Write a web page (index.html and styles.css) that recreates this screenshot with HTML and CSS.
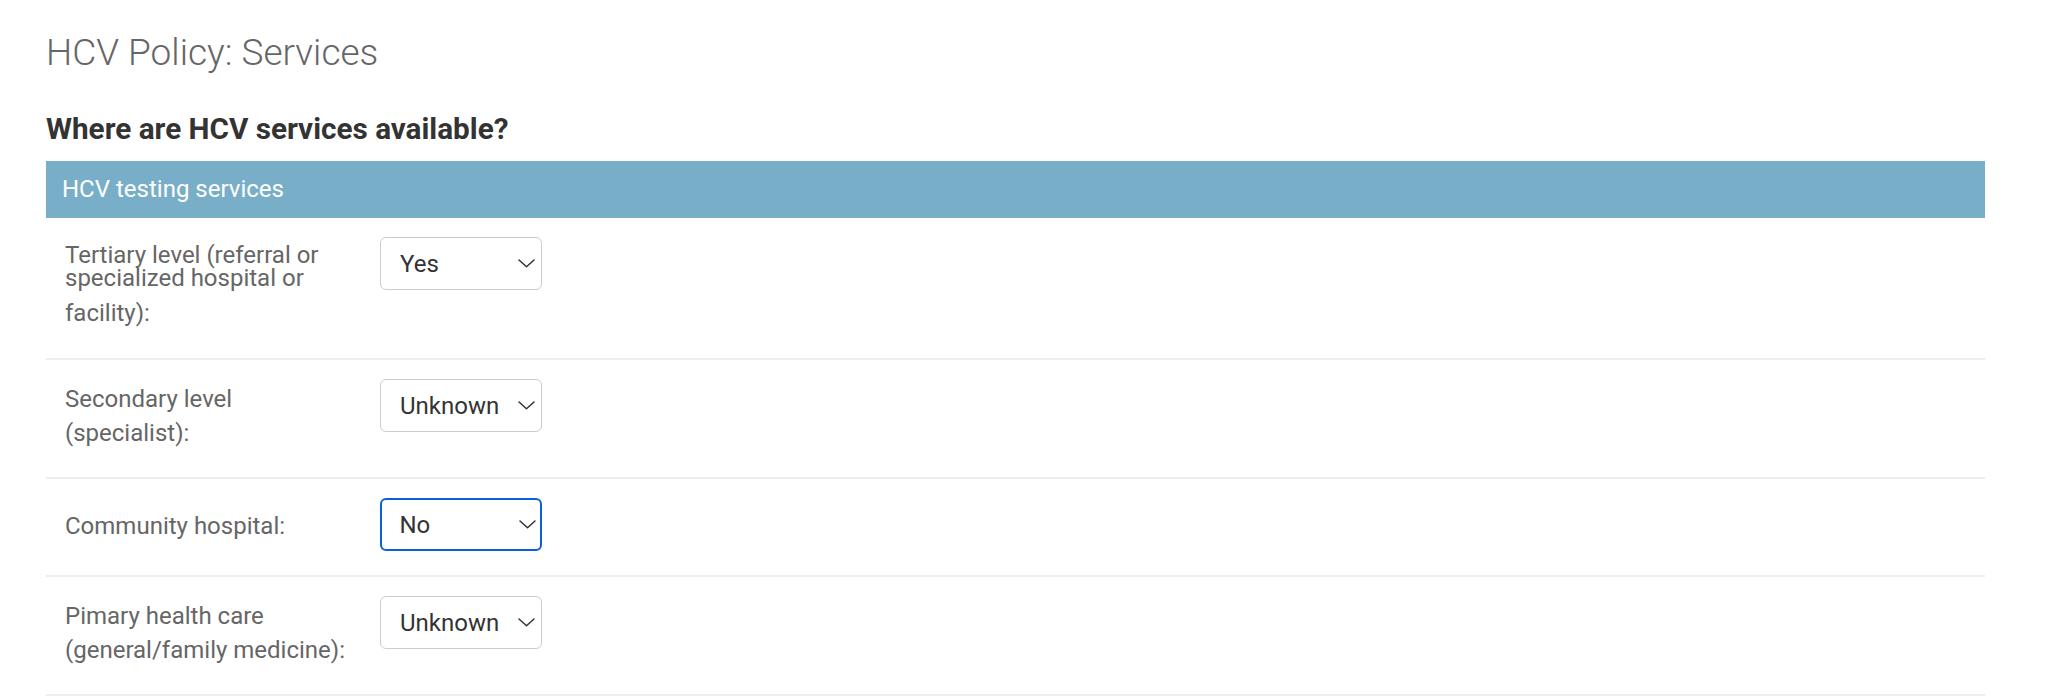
FILE: index.html
```html
<!DOCTYPE html>
<html>
<head>
<meta charset="utf-8">
<link rel="stylesheet" href="styles.css">
</head>
<body>
<div class="page">
  <h1 class="title">HCV Policy: Services</h1>
  <h2 class="question">Where are HCV services available?</h2>
  <div class="fieldset">
    <div class="caption">HCV testing services</div>
    <div class="row">
      <div class="label label-long"><span class="tight">Tertiary level (referral or specialized hospital or</span><span class="line">facility):</span></div>
      <div class="select"><span class="value">Yes</span><svg class="chev" viewBox="0 0 17 9" width="17" height="9"><path d="M1 1 L8.5 7.8 L16 1" fill="none" stroke="#333" stroke-width="1.5" stroke-linecap="round" stroke-linejoin="round"/></svg></div>
    </div>
    <div class="row">
      <div class="label label-two">Secondary level (specialist):</div>
      <div class="select"><span class="value">Unknown</span><svg class="chev" viewBox="0 0 17 9" width="17" height="9"><path d="M1 1 L8.5 7.8 L16 1" fill="none" stroke="#333" stroke-width="1.5" stroke-linecap="round" stroke-linejoin="round"/></svg></div>
    </div>
    <div class="row">
      <div class="label label-one">Community hospital:</div>
      <div class="select focused"><span class="value">No</span><svg class="chev" viewBox="0 0 17 9" width="17" height="9"><path d="M1 1 L8.5 7.8 L16 1" fill="none" stroke="#333" stroke-width="1.5" stroke-linecap="round" stroke-linejoin="round"/></svg></div>
    </div>
    <div class="row">
      <div class="label label-two">Pimary health care (general/family medicine):</div>
      <div class="select"><span class="value">Unknown</span><svg class="chev" viewBox="0 0 17 9" width="17" height="9"><path d="M1 1 L8.5 7.8 L16 1" fill="none" stroke="#333" stroke-width="1.5" stroke-linecap="round" stroke-linejoin="round"/></svg></div>
    </div>
  </div>
</div>
</body>
</html>
```
FILE: styles.css
```css
html, body {
  margin: 0;
  padding: 0;
  background: #fff;
}
body {
  font-family: Roboto, "Liberation Sans", sans-serif;
}
.page {
  padding: 0 63px 0 46px;
}
.title {
  margin: 0;
  padding-top: 33px;
  font-size: 37px;
  line-height: 40px;
  font-weight: 300;
  color: #666;
}
.question {
  margin: 40px 0 0 0;
  font-size: 29.7px;
  line-height: 32px;
  font-weight: 700;
  color: #333;
}
.fieldset {
  margin-top: 16px;
}
.caption {
  background: #79aec8;
  color: #fff;
  font-size: 24px;
  line-height: 57px;
  height: 57px;
  padding-left: 16px;
}
.row {
  display: flex;
  align-items: flex-start;
  padding: 19px 0 24px 19px;
  border-bottom: 2px solid #eeeeee;
}
.label {
  width: 288px;
  padding: 0 27px 0 0;
  flex: none;
  font-size: 24px;
  line-height: 34px;
  color: #666;
}
.label-long {
  padding-top: 6.5px;
  padding-bottom: 4.5px;
}
.label-two {
  padding-top: 3px;
  padding-bottom: 3px;
}
.label-one {
  padding-top: 11px;
}
.tight {
  display: block;
  line-height: 23px;
}
.line {
  display: block;
  margin-top: 6px;
}
.select {
  box-sizing: border-box;
  width: 162px;
  height: 53px;
  flex: none;
  border: 1px solid #cccccc;
  border-radius: 6px;
  display: flex;
  align-items: center;
  justify-content: space-between;
  padding: 0 6px 0 19px;
  font-size: 24px;
  color: #333;
}
.select.focused {
  border: 2.5px solid #0b5fdb;
  padding-left: 17.5px;
  padding-right: 4.5px;
}
.chev {
  display: block;
}
```
